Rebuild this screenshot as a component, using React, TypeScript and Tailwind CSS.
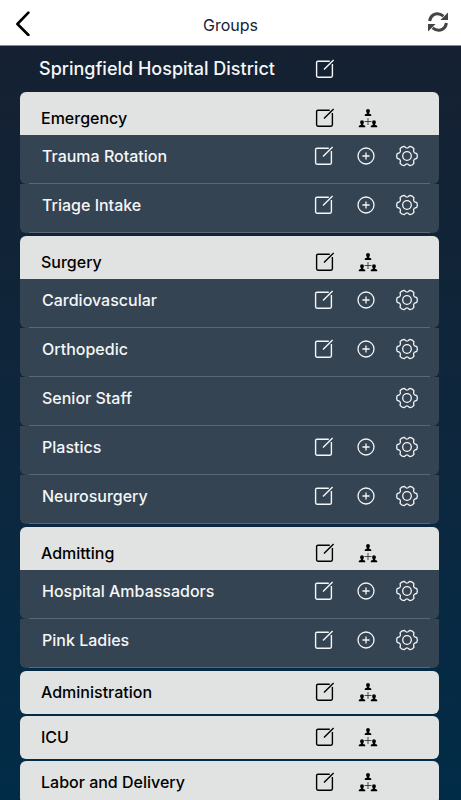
import { useState } from "react"

type Team = { name: string; locked?: boolean }
type Group = { name: string; teams: Team[] }

const groups: Group[] = [
  { name: "Emergency", teams: [{ name: "Trauma Rotation" }, { name: "Triage Intake" }] },
  {
    name: "Surgery",
    teams: [
      { name: "Cardiovascular" },
      { name: "Orthopedic" },
      { name: "Senior Staff", locked: true },
      { name: "Plastics" },
      { name: "Neurosurgery" },
    ],
  },
  { name: "Admitting", teams: [{ name: "Hospital Ambassadors" }, { name: "Pink Ladies" }] },
  { name: "Administration", teams: [] },
  { name: "ICU", teams: [] },
  { name: "Labor and Delivery", teams: [] },
]

function EditIcon() {
  return (
    <svg viewBox="0 0 20 20" className="size-5" fill="none" stroke="currentColor" strokeWidth="1.4" aria-hidden="true">
      <path d="M14.8 2.2H3Q1.6 2.2 1.6 3.6V16.8Q1.6 18.2 3 18.2H16Q17.4 18.2 17.4 16.8V5" />
      <path d="M9 10.6L18.6 1" />
    </svg>
  )
}

function PlusIcon() {
  return (
    <svg viewBox="0 0 20 20" className="size-5" fill="none" stroke="currentColor" strokeWidth="1.3" aria-hidden="true">
      <circle cx="10" cy="10" r="8" />
      <path d="M10 6.4V13.6M6.4 10H13.6" />
    </svg>
  )
}

function GearIcon() {
  return (
    <svg viewBox="0 0 22 22" className="size-[22px]" fill="none" stroke="currentColor" strokeWidth="1.3" strokeLinejoin="round" aria-hidden="true">
      <circle cx="11" cy="11" r="4.3" />
      <path d="M20.8 8.7Q21.8 11 20.8 13.3L18.6 14.2Q17.6 14.8 17.6 16L17.9 18.4Q16.45 20.4 13.95 20.7L12 19.2Q11 18.6 10 19.2L8.05 20.7Q5.55 20.4 4.1 18.4L4.4 16Q4.4 14.8 3.4 14.2L1.2 13.3Q.2 11 1.2 8.7L3.4 7.8Q4.4 7.2 4.4 6L4.1 3.6Q5.55 1.6 8.05 1.3L10 2.8Q11 3.4 12 2.8L13.95 1.3Q16.45 1.6 17.9 3.6L17.6 6Q17.6 7.2 18.6 7.8Z" />
    </svg>
  )
}

const person = "M3 0Q4.9 0 4.9 1.8Q4.9 3.2 4.2 3.8V4.7L5.8 5.3Q6.3 5.6 6.3 7H-.3Q-.3 5.6 .2 5.3L1.8 4.7V3.8Q1.1 3.2 1.1 1.8Q1.1 0 3 0Z"

function MembersIcon() {
  return (
    <svg viewBox="0 0 20 20" className="size-5" fill="currentColor" aria-hidden="true">
      <path d={person} transform="translate(7 1)" />
      <path d={person} transform="translate(1 12.2)" />
      <path d={person} transform="translate(13 12.2)" />
      <path d="M10 10V17M6.5 13.5H13.5" stroke="currentColor" strokeWidth=".8" opacity=".85" />
    </svg>
  )
}

function RefreshIcon() {
  return (
    <svg viewBox="0 0 20 20" className="size-5" fill="none" stroke="currentColor" strokeWidth="3" aria-hidden="true">
      <path d="M1.6 9Q2.2 4.8 5.4 2.9Q10.4 .2 15.4 4.2" />
      <path d="M18.4 11Q17.8 15.2 14.6 17.1Q9.6 19.8 4.6 15.8" />
      <path d="M20 .6V8H12.4ZM0 19.4V12H7.6Z" fill="currentColor" stroke="none" />
    </svg>
  )
}

function TeamRow({ team }: { team: Team }) {
  return (
    <li className="rounded-b-md bg-[#354452] px-[9px] text-[#f4f6f8]">
      <div className="flex h-[49px] items-center border-b border-[#5b6873] pr-3 pb-1.5 pl-[13px]">
        <span className="flex-1 text-base font-medium">{team.name}</span>
        {!team.locked && (
          <>
            <button aria-label={`Edit ${team.name}`} className="mr-[22px]"><EditIcon /></button>
            <button aria-label={`Add to ${team.name}`} className="mr-5"><PlusIcon /></button>
          </>
        )}
        <button aria-label={`${team.name} settings`}><GearIcon /></button>
      </div>
    </li>
  )
}

function GroupSection({ group }: { group: Group }) {
  const [open, setOpen] = useState(group.teams.length > 0)

  return (
    <section>
      <div
        className={`flex h-[43px] items-center bg-[#e1e3e2] pr-[61px] pl-[21px] text-black ${
          open ? "rounded-t-md pt-2" : "rounded-md pb-0.5"
        }`}
      >
        <h2 className="flex-1 text-base font-medium">
          <button onClick={() => setOpen(!open)} aria-expanded={open}>{group.name}</button>
        </h2>
        <button aria-label={`Edit ${group.name}`} className="mr-[23px]"><EditIcon /></button>
        <button aria-label={`${group.name} members`}><MembersIcon /></button>
      </div>
      {open && (
        <ul className="pb-px">
          {group.teams.map((team) => (
            <TeamRow key={team.name} team={team} />
          ))}
        </ul>
      )}
    </section>
  )
}

export default function App() {
  return (
    <div className="flex h-screen flex-col bg-linear-to-b from-[#152030] to-[#012c48] font-[Inter,sans-serif]">
      <header className="grid h-[46px] shrink-0 grid-cols-[1fr_auto_1fr] items-center border-b border-[#8b8f94] bg-white px-[13px]">
        <button aria-label="Back" className="justify-self-start">
          <svg viewBox="0 0 20 26" className="h-[26px] w-5" fill="none" stroke="#000" strokeWidth="2.6" strokeLinecap="round" strokeLinejoin="round" aria-hidden="true">
            <path d="M15.4 2.6L4.4 14L15.4 25" />
          </svg>
        </button>
        <h1 className="pt-1 text-base text-[#152238]">Groups</h1>
        <button aria-label="Refresh" className="justify-self-end pb-px text-[#444]">
          <RefreshIcon />
        </button>
      </header>

      <main className="min-h-0 flex-1 overflow-y-auto pr-[22px] pl-5">
        <div className="flex h-[46px] items-center pr-[104px] pl-[19px] text-[#f4f6f8]">
          <h2 className="flex-1 text-lg font-medium">Springfield Hospital District</h2>
          <button aria-label="Edit Springfield Hospital District"><EditIcon /></button>
        </div>
        <div className="flex flex-col gap-0.5">
          {groups.map((group) => (
            <GroupSection key={group.name} group={group} />
          ))}
        </div>
      </main>
    </div>
  )
}
